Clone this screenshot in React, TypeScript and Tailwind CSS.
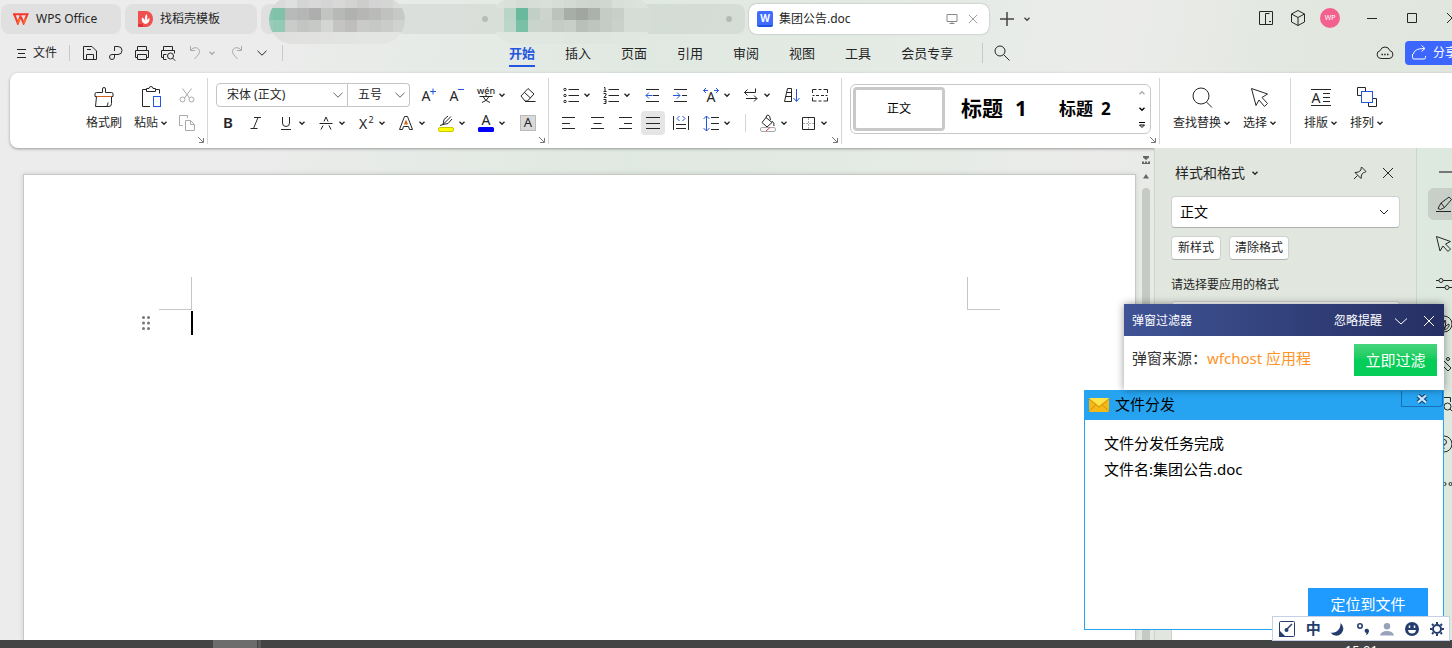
import { ReactNode } from 'react'
import clsx from 'clsx'

type IconProps = {
  d?: string
  blue?: string
  size?: string
  box?: number
  className?: string
  children?: ReactNode
}

const Icon = ({ d, blue, size = 'size-5', box = 20, className, children }: IconProps) => (
  <svg
    viewBox={`0 0 ${box} ${box}`}
    fill="none"
    stroke="currentColor"
    aria-hidden="true"
    className={clsx('shrink-0', size, className)}
  >
    {d && <path d={d} />}
    {blue && <path d={blue} stroke="#2456e0" />}
    {children}
  </svg>
)

const Letter = ({ x = 10, y = 15, size = 14, weight = 400, children }: {
  x?: number
  y?: number
  size?: number
  weight?: number
  children: string
}) => (
  <text
    x={x}
    y={y}
    fontSize={size}
    fontWeight={weight}
    fill="currentColor"
    stroke="none"
    textAnchor="middle"
    fontFamily="Noto Sans"
  >
    {children}
  </text>
)

const Caret = ({ className }: { className?: string }) => (
  <Icon box={8} size="size-2" className={className}>
    <path d="M1.5 2.8l2.5 2.4l2.5-2.4" strokeWidth="1.4" />
  </Icon>
)

const Chevron = ({ className }: { className?: string }) => (
  <Icon box={12} size="size-3" className={className} d="M1.5 3.8l4.5 4.4l4.5-4.4" />
)

const Close = ({ className, size }: { className?: string; size?: string }) => (
  <Icon box={12} size={size ?? 'size-3'} className={className} d="M1 1l10 10M11 1L1 11" />
)

const Tool = ({ label, menu, active, className, children }: {
  label: string
  menu?: boolean
  active?: boolean
  className?: string
  children: ReactNode
}) => (
  <button
    aria-label={label}
    className={clsx(
      'flex h-6 shrink-0 items-center rounded hover:bg-black/5',
      menu ? 'w-10 gap-0.5 pl-1.5' : 'w-7 justify-center',
      className
    )}
  >
    {active ? (
      <span className="flex size-6 items-center justify-center rounded bg-[#e5e5e5]">{children}</span>
    ) : (
      children
    )}
    {menu && <Caret />}
  </button>
)

const BigTool = ({ label, menu, children }: { label: string; menu?: boolean; children: ReactNode }) => (
  <button className="flex flex-col items-center gap-1 rounded text-xs leading-5">
    {children}
    <span className="flex items-center gap-0.5 whitespace-nowrap">
      {label}
      {menu && <Caret />}
    </span>
  </button>
)

const Group = ({ children, corner, className }: { children: ReactNode; corner?: boolean; className?: string }) => (
  <div className={clsx('relative flex h-[66px] shrink-0 border-r border-[#d6d6d6] pb-1', className)}>
    {children}
    {corner && (
      <Icon box={8} size="size-2" className="absolute bottom-0 right-0.5 text-[#777]" d="M1 1l5 5M6.5 2v4.5H2" />
    )}
  </div>
)

const TAB = 'relative flex h-[30px] shrink-0 items-center rounded-lg bg-black/5'

const mosaicA = [
  ['#dadbda', '#d9dad9', '#dde0df', '#d3d4d3', '#d7d8d7', '#d4d4d4', '#d8d9d7', '#d2d3d2', '#cdcecc', '#d3d4d3', '#d5d6d4', '#dadcd9'],
  ['#86c4ab', '#7fc2a9', '#b8bab9', '#b5b6b5', '#adaead', '#c1c4c1', '#b6b9b6', '#afb2af', '#b6b7b5', '#babbb9', '#c0c2bf', '#c6c9c5'],
  ['#9bccb9', '#92cab5', '#c9ccca', '#c3c5c3', '#c7c9c7', '#d3d6d3', '#c4c4c2', '#c0bebc', '#c9cbc8', '#c6c8c5', '#c9ccc8', '#cfd2ce'],
  ['#dfe0de', '#dfe0de', '#e0e1df', '#e1e2e0', '#e1e2e0', '#e2e3e1', '#e2e4e1', '#e2e4e1', '#e2e5e1', '#e2e5e1', '#e2e5e1', '#e2e5e1']
]
const mosaicB = [
  ['#dce2dd', '#d9e0da', '#d5dcd6', '#d7ddd7', '#d9dfd9', '#d6dcd6', '#d3d9d3', '#cfd5cf', '#ced4ce', '#d0d6d0', '#d8ded8', '#dae0da', '#dce2dc', '#dce2dc'],
  ['#d8dfd8', '#b9d5c8', '#68b99d', '#c2cfc6', '#cdd3cd', '#bcc3bc', '#a8ada8', '#a1a6a1', '#acb1ac', '#c5cbc5', '#c8cfc8', '#d6ddd6', '#d6ddd6', '#d6ddd6'],
  ['#d8dfd8', '#bcd6ca', '#7ac0a6', '#c9d5cc', '#cbd1cb', '#c5cbc5', '#c8cec8', '#b9bfb9', '#bec5be', '#c5cbc5', '#cad1ca', '#d6ddd6', '#d6ddd6', '#d6ddd6'],
  ['#e0e6e0', '#e0e6e0', '#e0e6e0', '#e0e6e0', '#e0e6e0', '#e0e6e0', '#dfe5df', '#dfe5df', '#dfe5df', '#dfe5df', '#e0e6e0', '#e0e6e0', '#e0e6e0', '#e0e6e0']
]

const Mosaic = ({ rows }: { rows: string[][] }) => (
  <svg
    width={rows[0].length * 12}
    height={rows.length * 12}
    shapeRendering="crispEdges"
    className="shrink-0"
    aria-hidden="true"
  >
    {rows.map((row, y) =>
      row.map((c, x) => <rect key={`${x}-${y}`} x={x * 12} y={y * 12} width="12" height="12" fill={c} />)
    )}
  </svg>
)

const TitleBar = () => (
  <header className="flex h-[38px] shrink-0 items-start gap-1 pl-px text-xs">
    <button className={clsx(TAB, 'mt-1 w-[120px] gap-[7px] pl-3')}>
      <svg viewBox="0 0 16 12" className="h-3 w-4" fill="none" stroke="#f5372d" strokeWidth="2">
        <path d="M0 1.2h11.5M1.2 1.2l3.6 9.2l3-8M8 4.2l2.6 6.2l3.8-9.2h-3" />
        <path d="M4.8 10.4l2-5M10.6 10.4l2-5" stroke="#ff6a2b" />
      </svg>
      WPS Office
    </button>
    <button className={clsx(TAB, 'mt-1 w-[132px] gap-[7px] pl-[13px]')}>
      <svg viewBox="0 0 15 16" className="h-4 w-[15px]">
        <path d="M0 0h8a7 8 0 0 1 0 16H1a1 1 0 0 1-1-1z" fill="#f0514f" />
        <path d="M0 13h5v3H1a1 1 0 0 1-1-1z" fill="#d9363b" />
        <path d="M7.5 13C3.5 12 3.5 8 4 6.5c2 1 3 2.500 3.200 4C6.500 7 7 5 8.500 3c1.200 2 1 5 .2 7c.6-1.500 1.500-2.500 2.800-3c.3 3-1 5.500-4 6z" fill="#fff" />
      </svg>
      找稻壳模板
    </button>
    <button aria-label="文档一" className={clsx(TAB, 'mt-1 w-60 justify-end pr-[13px]')}>
      <span className="absolute -top-2 left-2 flex h-12 w-[136px] justify-end overflow-hidden rounded-3xl">
        <Mosaic rows={mosaicA} />
      </span>
      <span className="size-1.5 rounded-full bg-[#b9bbb8]" />
    </button>
    <button aria-label="文档二" className={clsx(TAB, 'mt-1 w-60 justify-end pr-[13px]')}>
      <span className="absolute -left-[13px] -top-2 flex h-12 w-40 overflow-hidden rounded-3xl">
        <Mosaic rows={mosaicB} />
      </span>
      <span className="size-1.5 rounded-full bg-[#b4bab4]" />
    </button>
    <div className="mt-1 flex h-[30px] w-60 shrink-0 items-center rounded-lg bg-white pl-2 pr-[11px] shadow-[0_0_2px_rgba(0,0,0,0.3)]">
      <span className="mr-1.5 flex size-4 items-center justify-center rounded-[2px] border-b-2 border-[#1c52e0] bg-[#3f6bff] text-[10px] font-bold leading-none text-white">
        W
      </span>
      集团公告.doc
      <Icon box={12} size="size-3" className="ml-auto mr-2.5 text-[#888]" d="M1 1.500h10v7H1zM6 8.500v2M3.500 10.500h5" />
      <button aria-label="关闭" className="text-[#888]">
        <Close size="size-2.5" />
      </button>
    </div>
    <button aria-label="新建" className="ml-1.5 mt-1 flex h-[30px] items-center gap-2 text-[#444]">
      <Icon box={16} size="size-4" className="stroke-[1.5]" d="M8 1v14M1 8h14" />
      <Caret />
    </button>
    <div className="-mr-5 ml-auto flex h-9 items-center gap-3">
      <button aria-label="分屏">
        <Icon d="M3.500 3.500h13v13h-13zM9.500 16V5.500h4M13 13.500h2" />
      </button>
      <button aria-label="应用">
        <Icon d="M10 2.500l6.500 3.500v8l-6.500 3.500L3.500 14V6zM3.500 6l6.500 3.500l6.500-3.500M10 9.500v8" />
      </button>
      <button className="flex size-5 items-center justify-center rounded-full bg-[#f4618f] text-[7px] text-white">
        WP
      </button>
      <div className="flex">
        <button aria-label="最小化" className="flex w-10 justify-center">
          <Icon box={12} size="size-3" d="M1 6.500h10" />
        </button>
        <button aria-label="最大化" className="flex w-10 justify-center">
          <Icon box={12} size="size-3" d="M1.500 1.500h9v9h-9z" />
        </button>
        <button aria-label="关闭窗口" className="flex w-10 justify-center">
          <Close />
        </button>
      </div>
    </div>
  </header>
)

const quick = [
  { label: '保存', d: 'M3.500 16.500v-13h8.500l4.500 4.500v8.500zM7 6.500h4M6.500 16.500v-5h7v5' },
  { label: '输出为PDF', d: 'M8.500 8V3.500H12a4 4 0 0 1 0 8H6a2.500 2.500 0 1 0 2.500 2.500v-2.500' },
  { label: '打印', d: 'M5.500 7.500v-4h9v4M5.500 14.500h-2v-7h13v7h-2M5.500 11.500h9v5h-9z' },
  { label: '打印预览', d: 'M5.500 7.500v-4h9v4M5.500 14.500h-2v-7h13v3M5.500 16.500v-5h3M5.500 16.500h3M9.500 13a3 3 0 1 0 6 0a3 3 0 1 0-6 0M14.700 15.200l2.500 2.500' }
]

const menus = ['开始', '插入', '页面', '引用', '审阅', '视图', '工具', '会员专享']

const MenuBar = () => (
  <div className="flex h-[35px] shrink-0 items-center pb-[5px] pl-4">
    <button className="flex items-center gap-1.5 text-xs">
      <Icon box={11} size="size-[11px]" d="M1 1.500h9M2 5.500h7M1 9.500h9" />
      文件
    </button>
    <span className="ml-3 mr-[7px] h-4 w-px bg-[#c9c9c9]" />
    {quick.map(({ label, d }) => (
      <button key={label} aria-label={label} className="flex w-[26px] justify-center">
        <Icon d={d} />
      </button>
    ))}
    <button aria-label="撤销" className="flex w-10 items-center justify-center gap-0.5 text-[#aaa]">
      <Icon d="M4.500 3v4.500H9M4.800 7.200C7 3.500 13.500 4 13.500 8.500c0 2.500-2 4-5 7.500" />
      <Caret />
    </button>
    <button aria-label="恢复" className="ml-0.5 flex w-[26px] justify-center text-[#aaa]">
      <Icon d="M15.500 3v4.500H11M15.200 7.200C13 3.500 6.500 4 6.500 8.500c0 2.500 2 4 5 7.500" />
    </button>
    <button aria-label="更多" className="flex w-[26px] justify-center">
      <Chevron />
    </button>
    <span className="ml-[7px] h-4 w-px bg-[#c9c9c9]" />
    <nav className="ml-[226px] flex gap-[30px] text-[13px] leading-5">
      {menus.map((m, i) => (
        <a
          key={m}
          href="#"
          className={clsx(
            'whitespace-nowrap border-b-2 pb-0.5 pt-[3px]',
            i === 0 ? 'border-[#2456e0] font-bold text-[#2456e0]' : 'border-transparent'
          )}
        >
          {m}
        </a>
      ))}
    </nav>
    <span className="mx-[9px] ml-[29px] h-5 w-px bg-[#c9c9c9]" />
    <button aria-label="搜索">
      <Icon d="M3 8a5 5 0 1 0 10 0a5 5 0 1 0-10 0M11.600 11.600l5.900 5.900" />
    </button>
    <button aria-label="云同步" className="ml-auto mr-2.5 shrink-0">
      <Icon d="M6 15.500a4 4 0 0 1-.8-7.900a5 5 0 0 1 9.600 0a4 4 0 0 1-.8 7.900z">
        <path d="M6.500 11.500h1.500M9.200 11.500h1.500M12 11.500h1.500" strokeWidth="1.500" />
      </Icon>
    </button>
    <button className="-mr-[17px] flex h-6 w-16 shrink-0 items-center gap-1 rounded bg-[#3d66ff] pl-1 text-xs text-white">
      <Icon d="M3.500 11v3.500a1.500 1.500 0 0 0 1.500 1.500h10a1.500 1.500 0 0 0 1.500-1.500V13M4.500 11c.5-3 3-5.500 11-5.500M12.500 2.500l3.500 3l-3.500 3" />
      <span className="whitespace-nowrap">分享</span>
    </button>
  </div>
)

const Ribbon = () => (
  <div className="-mr-3 ml-2.5 flex h-[75px] shrink-0 items-center overflow-hidden rounded-lg bg-white shadow-[0_1px_3px_rgba(0,0,0,0.35)]">
    <Group corner className="w-[198px] items-center pl-[76px]">
      <div className="flex">
        <BigTool label="格式刷">
          <Icon box={24} size="size-6" d="M10.500 7.500V4a1.500 1.500 0 0 1 3 0v3.500h6a1.500 1.500 0 0 1 1.500 1.500v2.500h-1.500v7q0 3-2.500 3H3.500l1-10H3V9a1.500 1.500 0 0 1 1.500-1.500zM14.500 21.500q1.500-1 1.500-4">
            <path d="M5 11.500h14.500" stroke="#d2601a" />
          </Icon>
        </BigTool>
        <div className="ml-3">
          <BigTool label="粘贴" menu>
            <Icon box={24} size="size-6" d="M7 4.500H3.500v17H11M16 4.500h4.500v4M7.500 6.500v-3h2.500a2 2 0 0 1 4 0h2.500v3z">
              <rect x="14.5" y="11.5" width="7" height="10" stroke="#2456e0" />
            </Icon>
          </BigTool>
        </div>
      </div>
      <div className="ml-[5px] flex flex-col gap-1 text-[#aaa]">
        <Tool label="剪切">
          <Icon d="M5.500 3.500l7 9.500M14.500 3.500l-7 9.500M3 14.500a2.500 2.500 0 1 0 5 0a2.500 2.500 0 1 0-5 0M12 14.500a2.500 2.500 0 1 0 5 0a2.500 2.500 0 1 0-5 0" />
        </Tool>
        <Tool label="复制">
          <Icon d="M6 12.500H2.500v-10h8V5M8.500 7.500h5l4 4v6h-9zM13.500 7.500v4h4" />
        </Tool>
      </div>
    </Group>

    <Group corner className="w-[341px] flex-col justify-center gap-1 pl-1.5">
      <div className="flex items-center">
        <div className="ml-0.5 mr-1 flex h-6 text-xs">
          <div className="relative">
            <select aria-label="字体" className="h-6 w-[132px] appearance-none rounded-l border border-[#c4c4c4] pl-2.5">
              <option>宋体 (正文)</option>
            </select>
            <Chevron className="pointer-events-none absolute right-1 top-1.5 text-[#666]" />
          </div>
          <div className="relative">
            <select aria-label="字号" className="h-6 w-[62px] appearance-none rounded-r border border-l-0 border-[#c4c4c4] pl-2.5">
              <option>五号</option>
            </select>
            <Chevron className="pointer-events-none absolute right-1 top-1.5 text-[#666]" />
          </div>
        </div>
        <Tool label="增大字号">
          <Icon blue="M12 6.500h6M15 3.500v6"><Letter x={8} y={16}>A</Letter></Icon>
        </Tool>
        <Tool label="减小字号">
          <Icon blue="M12 4.500h6"><Letter x={8} y={16}>A</Letter></Icon>
        </Tool>
        <Tool label="拼音指南" menu>
          <Icon d="M3.500 11.500h13M6 17.500q5-1.500 7-6M14 17.500q-5-1.500-7-6M10 9.500v2"><Letter y={9} size={9} weight={500}>wén</Letter></Icon>
        </Tool>
        <Tool label="清除格式" className="ml-1">
          <Icon d="M3 11l7-7.500l6 5.500l-6.500 7H7zM6.500 7.500l6 5.500M7 16.500h10.500" />
        </Tool>
      </div>
      <div className="flex items-center">
        <Tool label="加粗"><span className="text-[15px] font-semibold">B</span></Tool>
        <Tool label="倾斜">
          <Icon d="M8 4.500h7M4.500 15.500h7M12 4.500l-4.500 11" />
        </Tool>
        <Tool label="下划线" menu>
          <Icon d="M6.500 4v6a3.500 3.500 0 0 0 7 0V4M5 16.500h10" />
        </Tool>
        <Tool label="删除线" menu>
          <Icon d="M3.500 10.500h13M8 8.500l2-4.500l2 4.500M7 12.500l-2 4M13 12.500l2 4" />
        </Tool>
        <Tool label="上标" menu>
          <Icon><Letter x={7} y={16}>X</Letter><Letter x={15} y={10} size={9}>2</Letter></Icon>
        </Tool>
        <Tool label="文字效果" menu>
          <Icon d="M3.500 16.500l5-13h3l5 13h-3l-1-3h-5l-1 3z">
            <path d="M8 11.500l2-5l2 5z" fill="#d2601a" stroke="none" />
          </Icon>
        </Tool>
        <Tool label="突出显示" menu>
          <Icon d="M4 12.500l3-1l8-8M7 11.500l1-5l4-3.500M7 11.500l5-1l4-4.500">
            <rect x="2.500" y="14.500" width="15" height="4" rx="1.500" fill="#ff0" stroke="#c8c800" />
          </Icon>
        </Tool>
        <Tool label="字体颜色" menu>
          <Icon>
            <Letter y={12}>A</Letter>
            <rect x="2" y="14" width="16" height="5" rx="1.500" fill="#00f" stroke="none" />
          </Icon>
        </Tool>
        <Tool label="字符底纹" className="ml-1">
          <span className="flex size-4 items-center justify-center border border-[#bbb] bg-[#d9d9d9] text-[13px]">A</span>
        </Tool>
      </div>
    </Group>

    <Group corner className="w-[293px] flex-col justify-center gap-1 pl-1.5">
      <div className="flex items-center">
        <Tool label="项目符号" menu>
          <Icon d="M7.500 4.500H18M7.500 10.500H18M7.500 16.500H18">
            <circle cx="4" cy="4.500" r="1.200" />
            <circle cx="4" cy="10.500" r="1.200" />
            <circle cx="4" cy="16.500" r="1.200" />
          </Icon>
        </Tool>
        <Tool label="编号" menu>
          <Icon d="M7.500 4.500H18M7.500 10.500H18M7.500 16.500H18M3 2.500h1v4M2.500 6.500h3M2.500 8.500h2.500v1.500L3 12.500h2.500M2.500 14.500H5v4H2.500M3.500 16.500H5" />
        </Tool>
        <Tool label="减少缩进" className="ml-[3px]">
          <Icon d="M4 4.500h13M11 10.500h6M4 16.500h13" blue="M4 10.500h6.500M7 7.500l-3 3l3 3" />
        </Tool>
        <Tool label="增加缩进">
          <Icon d="M4 4.500h13M12 10.500h5M4 16.500h13" blue="M3 10.500h7M7 7.500l3 3l-3 3" />
        </Tool>
        <Tool label="中文版式" menu className="ml-px">
          <Icon blue="M2.500 5.500H7M5 3l-2.500 2.500L5 8M13 5.500h4.500M15 3l2.500 2.500L15 8"><Letter y={17}>A</Letter></Icon>
        </Tool>
        <Tool label="换行" menu>
          <Icon d="M14.500 3.500v4h-11M6.500 4.500l-3 3l3 3M5 13.500h11M13 10.500l3 3l-3 3" />
        </Tool>
        <Tool label="排序" className="ml-[3px]">
          <Icon d="M2.500 16.500l3-13h4v13zM4.500 7.500h5M3.500 11.500h6" blue="M14.500 4v12M11.500 13l3 3.500l3-3.500" />
        </Tool>
        <Tool label="显示标记">
          <Icon d="M2.500 8V4.500h4M8.500 4.500h3M13.500 4.500h4V8M2.500 12.500V16h4M8.500 16h3M13.500 16h4v-3.500M2.500 10.500h2M6 10.500h3M11 10.500h3M15.500 10.500h2" />
        </Tool>
      </div>
      <div className="flex items-center">
        <Tool label="左对齐"><Icon d="M3 4.500h13M3 10.500h8M3 15.500h13" /></Tool>
        <Tool label="居中"><Icon d="M4 4.500h13M6.500 10.500h8M4 15.500h13" /></Tool>
        <Tool label="右对齐"><Icon d="M4 4.500h13M9 10.500h8M4 15.500h13" /></Tool>
        <Tool label="两端对齐" active><Icon d="M3 4.500h14M3 10.500h14M3 15.500h14" /></Tool>
        <Tool label="分散对齐">
          <Icon d="M2.500 3v14M17.500 3v14M5 11.500h10M5 15.500h10" blue="M8.500 3L6 5.500L8.500 8M11.500 3L14 5.500L11.500 8" />
        </Tool>
        <Tool label="行距" menu>
          <Icon d="M10 4.500h8M10 10.500h8M10 16.500h8" blue="M5.500 3v15M2.500 6l3-3l3 3M2.500 15l3 3l3-3" />
        </Tool>
        <span className="ml-2.5 mr-1.5 h-[18px] w-px bg-[#d6d6d6]" />
        <Tool label="底纹颜色" menu>
          <Icon d="M8 4.500l-4 5l5 4.500l5-4.500zM8 5q0-3 2-3t2.500 5M14 8q2.500 2 2 5">
            <rect x="2.500" y="14.500" width="15" height="4" rx="1.500" stroke="#aaa" fill="#fff" />
            <path d="M8 18l4-3.500" stroke="#e23b3b" />
          </Icon>
        </Tool>
        <Tool label="边框" menu>
          <Icon d="M4.500 4.500h12v12h-12z">
            <path d="M10.500 5v11M5 10.500h11" stroke="#aaa" strokeDasharray="2 1" />
          </Icon>
        </Tool>
      </div>
    </Group>

    <Group corner className="w-[318px] items-center pl-2">
      <div className="flex h-[50px] w-[301px] items-center rounded-md border border-[#c8c8c8] p-0.5 text-black">
        <button className="h-11 w-[92px] rounded border-3 border-[#c9c9c9] text-xs">正文</button>
        <button className="ml-4 flex gap-3 text-[21px] font-bold">
          <span>标题</span>
          <span>1</span>
        </button>
        <button className="ml-8 flex gap-2 text-[17px] font-bold">
          <span>标题</span>
          <span>2</span>
        </button>
        <div className="ml-auto mr-0.5 flex flex-col gap-2">
          <button aria-label="上一行" className="rotate-180 text-[#aaa]"><Caret className="block" /></button>
          <button aria-label="下一行"><Caret className="block" /></button>
          <button aria-label="展开样式">
            <Icon box={8} size="size-2" className="block" d="M1 1.500h6M1.500 4l2.500 2.500L6.500 4z" />
          </button>
        </div>
      </div>
    </Group>

    <Group className="w-[131px] items-center gap-3 pl-[13px]">
      <BigTool label="查找替换" menu>
        <Icon box={24} size="size-6" d="M3 11a8 8 0 1 0 16 0a8 8 0 1 0-16 0M16.500 17l5.500 5.500" />
      </BigTool>
      <BigTool label="选择" menu>
        <Icon box={24} size="size-6" d="M3.500 3.500l16 5.500l-5.500 3.500l5.500 6l-3 3l-5.500-6.500l-3 5.500z" />
      </BigTool>
    </Group>

    <div className="flex h-[66px] shrink-0 items-center gap-3 pb-1 pl-[13px]">
      <BigTool label="排版" menu>
        <Icon box={24} size="size-6" d="M2 4.500h20M2 20.500h20M14 8.500h7M14 12.500h7M14 16.500h7">
          <Letter x={7} y={18}>A</Letter>
        </Icon>
      </BigTool>
      <BigTool label="排列" menu>
        <Icon box={24} size="size-6" d="M6 10.500H2.500v-8h8V6M18 13.500h3.500v8h-8V18">
          <rect x="6.500" y="6.500" width="11" height="11" stroke="#2456e0" />
        </Icon>
      </BigTool>
    </div>
  </div>
)

const DocumentArea = () => (
  <main className="ml-[23px] mt-[26px] min-w-0 flex-1 border border-b-0 border-[#c6c8c6] bg-white pt-[102px] shadow-[0_0_5px_rgba(0,0,0,0.12)]">
    <div className="flex justify-between px-[135px]">
      <span className="size-[33px] border-b border-r border-[#c6c6c6]" />
      <span className="size-[33px] border-b border-l border-[#c6c6c6]" />
    </div>
    <div className="mt-px flex items-center gap-[41px] pl-[118px]">
      <svg viewBox="0 0 8 14" className="h-3.5 w-2 fill-[#777]" aria-hidden="true">
        {[1.5, 7, 12.5].map((y) => (
          <g key={y}>
            <circle cx="1.5" cy={y} r="1.5" />
            <circle cx="6.5" cy={y} r="1.5" />
          </g>
        ))}
      </svg>
      <span className="h-6 w-0.5 bg-black" />
    </div>
  </main>
)

const ScrollTrack = () => (
  <div className="flex w-[19px] shrink-0 flex-col items-center border-r border-[#cfd3ce] pl-px pt-2 text-[#666]">
    <svg viewBox="0 0 8 8" className="size-2 fill-current" aria-hidden="true">
      <path d="M1 0h6v1.500L4 4L1 1.500zM0 5.500h2V7h1V5.500h2V7h1V5.500h2V8H0z" />
    </svg>
    <svg viewBox="0 0 8 8" className="mt-2 size-2 fill-current" aria-hidden="true">
      <path d="M4 2l3 4.500H1z" />
    </svg>
    <div className="mt-2 w-2 flex-1 rounded-t bg-[#c5cac4]" />
  </div>
)

const StylePanel = () => (
  <aside className="flex w-[262px] shrink-0 flex-col border-r border-[#cfd3ce] bg-[#e1e6df] px-4 pt-[15px]">
    <div className="flex h-5 items-center pl-1 pr-1.5 text-sm">
      样式和格式
      <Caret className="ml-1.5" />
      <button aria-label="固定" className="ml-auto">
        <Icon box={16} size="size-4" d="M9.500 2l4.500 4.500l-1.500 1l-1 0l-2 2.500l-.5 3.500l-6-6l3.500-.5l2.500-2l0-1.500zM5.500 10.500L2 14" />
      </button>
      <button aria-label="关闭面板" className="ml-3.5">
        <Close />
      </button>
    </div>
    <div className="relative mt-[13px]">
      <select
        aria-label="当前样式"
        className="h-8 w-full appearance-none rounded border border-[#cfd1ce] border-b-[#aeb1ad] bg-white pl-2 text-sm text-black"
      >
        <option>正文</option>
      </select>
      <Icon box={12} size="size-3" className="pointer-events-none absolute right-2.5 top-2.5" d="M2 4l4 4l4-4" />
    </div>
    <div className="mt-2 flex gap-2 text-xs">
      <button className="h-6 w-[50px] whitespace-nowrap rounded border border-[#cfd1ce] border-b-[#aeb1ad] bg-white">新样式</button>
      <button className="h-6 w-[60px] whitespace-nowrap rounded border border-[#cfd1ce] border-b-[#aeb1ad] bg-white">清除格式</button>
    </div>
    <p className="mt-4 text-xs leading-[18px]">请选择要应用的格式</p>
    <div className="mt-[7px] flex-1 rounded-t border border-b-0 border-[#cfd1ce] bg-white" />
  </aside>
)

const rail = [
  { label: '选择', d: 'M2.500 2.500l14 5l-5 2.500l5 5l-2.500 2.500l-5-5.500l-3 5z' },
  { label: '属性', d: 'M2 6.500h3M5 6.500a2 2 0 1 0 4 0a2 2 0 1 0-4 0M9 6.500h9M2 13.500h9M11 13.500a2 2 0 1 0 4 0a2 2 0 1 0-4 0M15 13.500h3' },
  { label: '校对', d: 'M2 10a8 8 0 1 0 16 0a8 8 0 1 0-16 0M9.500 16q-1-6 1.500-10q2 3-1.500 10M10 16q1-5 5-6q1 4-5 6' },
  { label: '工具', d: 'M3 6l3-3l11 11l-3 3zM12.500 5a1.500 1.500 0 1 0 3 0a1.500 1.500 0 1 0-3 0' },
  { label: '查找', d: 'M16.500 8V3.500H8M3.500 3v13.500h4M10 12.500a3.500 3.500 0 1 0 7 0a3.500 3.500 0 1 0-7 0M16 15l2 2' },
  { label: '帮助', d: 'M2 10a8 8 0 1 0 16 0a8 8 0 1 0-16 0M7.500 8a2.500 2.500 0 1 1 2.500 2.500V12M10 13.500v1.500' },
  { label: '更多', d: 'M3 10a1.500 1.500 0 1 0 3 0a1.500 1.500 0 1 0-3 0M9 10a1.500 1.500 0 1 0 3 0a1.500 1.500 0 1 0-3 0M15 10a1.500 1.500 0 1 0 3 0a1.500 1.500 0 1 0-3 0' }
]

const SideRail = () => (
  <div className="-mr-3 flex w-[47px] shrink-0 flex-col gap-2 bg-[#dde9df] pl-[11px]">
    <button aria-label="收起" className="flex h-8 shrink-0 items-end justify-center">
      <Icon box={16} size="size-4" className="stroke-2 text-[#777]" d="M1 8h14" />
    </button>
    <button aria-label="样式" className="flex h-8 shrink-0 items-center rounded-md bg-[#c8cfc8] pl-1.5">
      <Icon d="M2 17.500h15M4 14.500l3-5.500l8-6l2.500 2.500l-7 8l-4 2zM7 9l3.500 4.500" />
    </button>
    {rail.map(({ label, d }) => (
      <button key={label} aria-label={label} className="flex h-8 shrink-0 items-center pl-1.5">
        <Icon d={d} />
      </button>
    ))}
  </div>
)

const FilterPopup = () => (
  <section className="relative z-10 w-80 bg-white shadow-[0_0_8px_rgba(0,0,0,0.4)]">
    <div className="flex h-8 items-center bg-linear-to-r from-[#3f5495] to-[#262f63] pl-2 pr-[9px] pt-px text-xs text-white">
      弹窗过滤器
      <button className="ml-auto">忽略提醒</button>
      <button aria-label="展开" className="ml-3">
        <Icon box={14} size="size-3.5" d="M1 4.500l6 5.500l6-5.500" />
      </button>
      <button aria-label="关闭提醒" className="ml-[15px]">
        <Close />
      </button>
    </div>
    <div className="flex h-[54px] items-start pl-2 pr-[7px] pt-2 text-[15px]">
      <p className="leading-7 text-[#333]">
        弹窗来源：<span className="text-[#ff9326]">wfchost 应用程</span>
      </p>
      <button className="ml-auto h-8 w-[83px] bg-linear-to-b from-[#45d47e] to-[#06cc58] to-50% text-white">
        立即过滤
      </button>
    </div>
  </section>
)

const FileDialog = () => (
  <section className="flex h-60 w-[360px] flex-col border border-[#26a4f2] bg-white text-[15px] text-black">
    <div className="flex h-[29px] items-start bg-[#26a4f2]">
      <div className="flex h-[27px] items-center gap-1.5 pl-1">
        <svg viewBox="0 0 20 14" className="h-3.5 w-5" aria-hidden="true">
          <rect width="20" height="14" rx="1" fill="#f5b915" />
          <path d="M0 0h20l-10 8z" fill="#ffe34a" />
          <path d="M0 1l10 8l10-8M0 13l7-6.500M20 13l-7-6.500" fill="none" stroke="#c98706" strokeWidth=".8" />
        </svg>
        文件分发
      </div>
      <button
        aria-label="关闭对话框"
        className="ml-auto flex h-4 w-[42px] items-center justify-center rounded-br border border-t-0 border-[#1571b4] text-white"
      >
        <svg viewBox="0 0 12 10" className="h-2.5 w-3" aria-hidden="true">
          <path d="M2 1.500l8 7M10 1.500l-8 7" stroke="#134f80" strokeWidth="4.500" />
          <path d="M2 1.500l8 7M10 1.500l-8 7" stroke="#cfe9ff" strokeWidth="2.200" />
        </svg>
      </button>
    </div>
    <div className="flex-1 px-[19px] pt-2.5 leading-[26px]">
      <p>文件分发任务完成</p>
      <p>文件名:集团公告.doc</p>
    </div>
    <button className="mb-2 mr-[15px] h-[33px] w-[120px] self-end bg-[#1f9bff] text-white">定位到文件</button>
  </section>
)

const ImeBar = () => (
  <div className="absolute bottom-[7px] right-0.5 z-20 flex h-[25px] w-[178px] items-center justify-between border border-[#c5d0e6] bg-white pl-1.5 pr-1 text-[#253d6e]">
    <button aria-label="输入法">
      <Icon box={16} size="size-4" className="block">
        <rect x=".5" y=".5" width="15" height="15" rx="1" />
        <path d="M0 9l7 7H0z" fill="currentColor" stroke="none" />
        <path d="M7 9l6-6" strokeWidth="1.500" />
        <circle cx="7.500" cy="9" r="2" fill="currentColor" stroke="none" />
      </Icon>
    </button>
    <button className="ml-0.5 text-[15px] font-bold leading-none">中</button>
    <button aria-label="半角">
      <Icon box={16} size="size-4" className="block">
        <path d="M10.500 2a7 7 0 1 1-10 9.500C6 13 11 8 10.500 2z" fill="currentColor" stroke="none" />
      </Icon>
    </button>
    <button aria-label="标点">
      <Icon box={16} size="size-4" className="block">
        <circle cx="5" cy="5" r="2.200" strokeWidth="1.600" />
        <path d="M9.500 9.500a2.300 2.300 0 1 1 4.500 1q-.5 3-3.500 4q1.200-1.500 1-2.500q-1.800-.5-2-2.500z" fill="currentColor" stroke="none" />
      </Icon>
    </button>
    <button aria-label="账号" className="text-[#98a2bb]">
      <Icon box={16} size="size-4" className="block">
        <path d="M8 2a3 3 0 1 1 0 6.500a3 3 0 1 1 0-6.500M1 14.500q1-4.500 7-4.500t7 4.500z" fill="currentColor" stroke="none" />
      </Icon>
    </button>
    <button aria-label="表情">
      <Icon box={16} size="size-4" className="block">
        <circle cx="8" cy="8" r="7" fill="currentColor" stroke="none" />
        <path d="M4 9h8q-.5 3.500-4 3.500T4 9z" fill="#fff" stroke="none" />
        <path d="M5.500 4.500v2.500M10.500 4.500v2.500" stroke="#fff" strokeWidth="1.500" />
      </Icon>
    </button>
    <button aria-label="设置">
      <Icon box={16} size="size-4" className="block">
        <circle cx="8" cy="8" r="4" strokeWidth="2" />
        <path d="M8 1v2M8 13v2M1 8h2M13 8h2M3 3l1.500 1.500M11.500 11.500L13 13M13 3l-1.500 1.500M4.500 11.500L3 13" strokeWidth="2" />
      </Icon>
    </button>
  </div>
)

const Taskbar = () => (
  <footer className="flex h-2 shrink-0 items-start overflow-hidden bg-[#444] text-[13px] leading-4 text-white">
    <span className="ml-[213px] h-2 w-11 bg-[#6c6c6c]" />
    <span className="ml-px h-2 w-[3px] bg-[#5a5a5a]" />
    <time className="ml-auto mr-[74px] pt-0.5">15:01</time>
  </footer>
)

export default function App() {
  return (
    <div
      className="relative flex h-screen flex-col overflow-hidden bg-[linear-gradient(100deg,#ececec_0%,#ececec_16%,#e0e9e1_42%,#e2eae3_52%,#ebecea_72%,#e2e7e0_84%,#e0e5dd_100%)] text-[#262626]"
      style={{ fontFamily: '"Noto Sans", "Noto Sans CJK SC", sans-serif' }}
    >
      <TitleBar />
      <MenuBar />
      <Ribbon />
      <div className="flex min-h-0 flex-1">
        <DocumentArea />
        <ScrollTrack />
        <StylePanel />
        <SideRail />
      </div>
      <Taskbar />
      <div className="absolute bottom-[18px] right-2 flex flex-col items-end">
        <FilterPopup />
        <FileDialog />
      </div>
      <ImeBar />
    </div>
  )
}
